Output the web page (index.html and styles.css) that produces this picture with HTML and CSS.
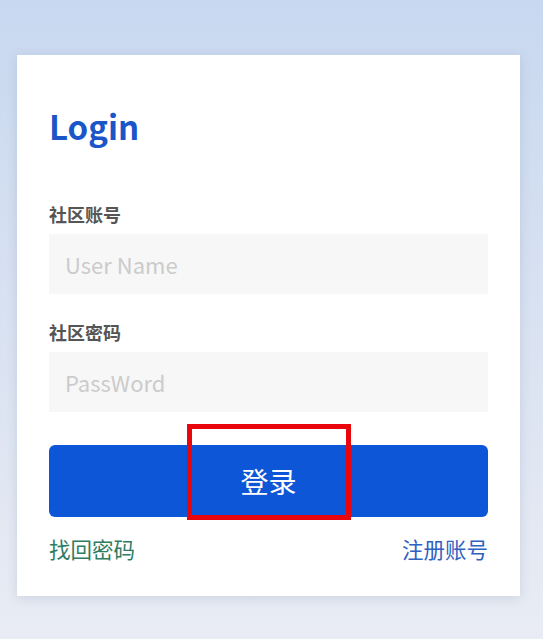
FILE: index.html
```html
<!DOCTYPE html>
<html lang="zh">
<head>
<meta charset="utf-8">
<title>Login</title>
<link rel="stylesheet" href="styles.css">
</head>
<body>
<div class="page">
  <div class="card">
    <h1 class="title">Login</h1>
    <div class="field">
      <label class="label">社区账号</label>
      <div class="input">User Name</div>
    </div>
    <div class="field">
      <label class="label">社区密码</label>
      <div class="input">PassWord</div>
    </div>
    <div class="btn-wrap">
      <div class="btn">登录</div>
      <div class="highlight"></div>
    </div>
    <div class="links">
      <a class="link forgot">找回密码</a>
      <a class="link register">注册账号</a>
    </div>
  </div>
</div>
</body>
</html>
```
FILE: styles.css
```css
html, body {
  margin: 0;
  padding: 0;
}
body {
  width: 543px;
  height: 639px;
  background: linear-gradient(180deg, #c8d8f0 0%, #d9e2f1 50%, #e9ecf4 100%);
  font-family: "Noto Sans CJK SC", "Noto Sans", sans-serif;
  overflow: hidden;
}
.page {
  padding: 55px 23px 0 17px;
}
.card {
  background: #fff;
  width: 503px;
  height: 541px;
  box-sizing: border-box;
  padding: 47px 32px 0 32px;
  box-shadow: 0 2px 10px rgba(120, 140, 170, 0.25);
}
.title {
  margin: 0 0 51px 0;
  font-size: 33px;
  font-weight: 700;
  line-height: 48px;
  color: #1a56c8;
}
.field {
  display: flex;
  flex-direction: column;
  margin-bottom: 25px;
}
.label {
  font-size: 18px;
  font-weight: 700;
  color: #555;
  line-height: 26px;
  margin-bottom: 7px;
}
.input {
  height: 60px;
  background: #f7f7f7;
  color: #cbcbcb;
  font-size: 22px;
  line-height: 60px;
  padding-left: 16px;
}
.btn-wrap {
  position: relative;
  margin-top: 33px;
}
.btn {
  height: 72px;
  border-radius: 6px;
  background: #0e56d8;
  color: #fff;
  font-size: 28px;
  line-height: 72px;
  text-align: center;
}
.highlight {
  position: absolute;
  left: 138px;
  top: -21px;
  width: 154px;
  height: 86px;
  border: 5px solid #e8060c;
}
.links {
  display: flex;
  justify-content: space-between;
  margin-top: 17px;
}
.link {
  font-size: 21.5px;
  line-height: 30px;
}
.forgot {
  color: #2e7d62;
}
.register {
  color: #2f62c0;
}
```
